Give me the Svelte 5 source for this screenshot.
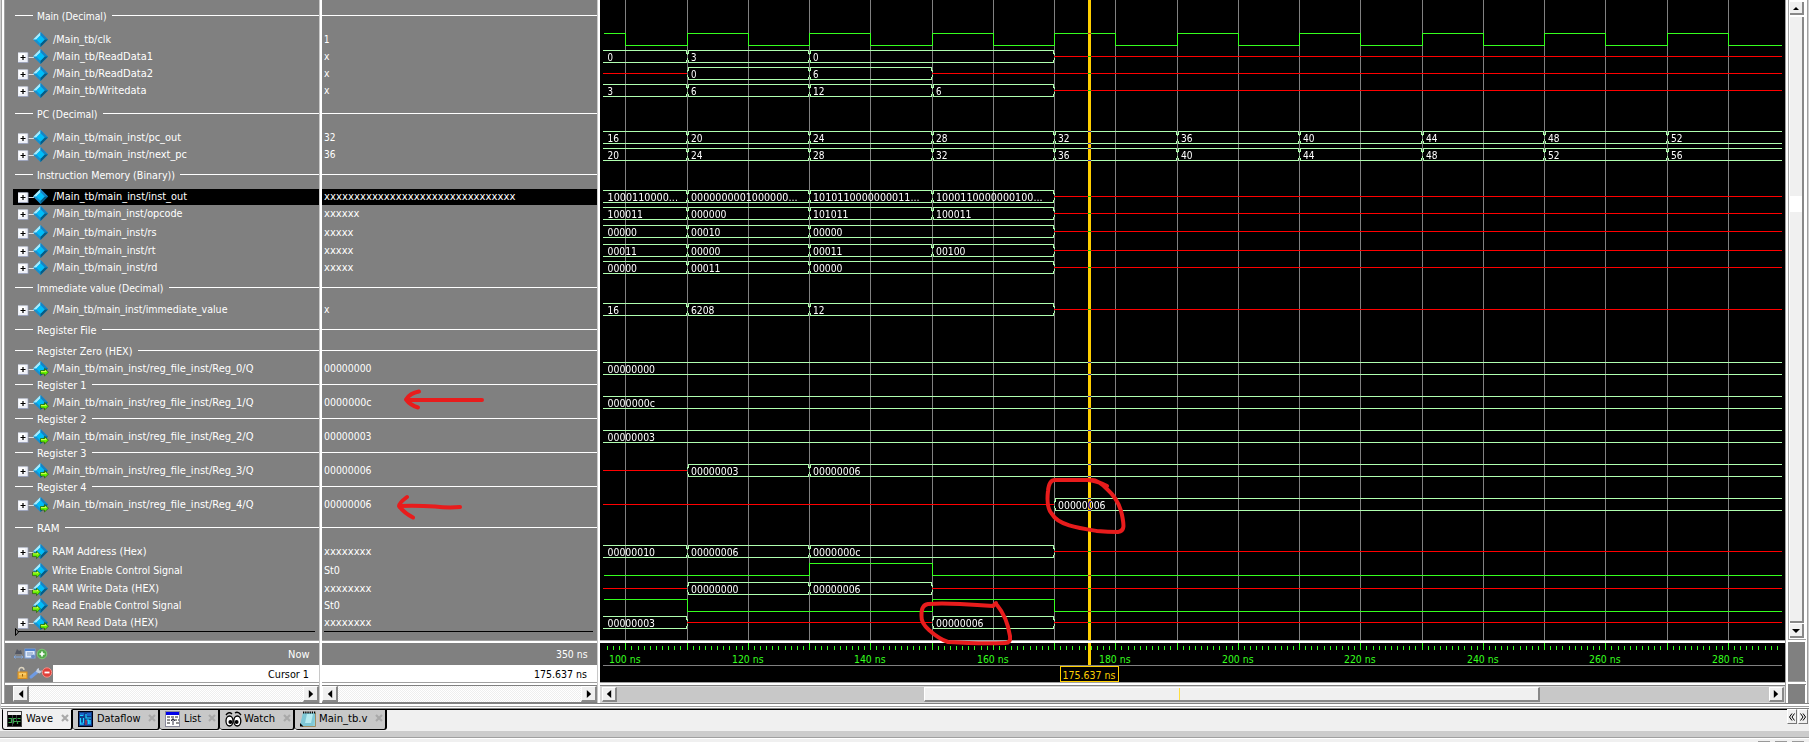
<script>
  const groups = [
    ['d', 20, 'Main (Decimal)', 69.5],
    ['s', 43, '/Main_tb/clk', 58, '1', { plain: true }],
    ['s', 60, '/Main_tb/ReadData1', 100, 'x'],
    ['s', 77, '/Main_tb/ReadData2', 100, 'x'],
    ['s', 94, '/Main_tb/Writedata', 93.5, 'x'],
    ['d', 118, 'PC (Decimal)', 60.5],
    ['s', 141, '/Main_tb/main_inst/pc_out', 128, '32'],
    ['s', 158, '/Main_tb/main_inst/next_pc', 134, '36'],
    ['d', 179, 'Instruction Memory (Binary))', 138],
    ['s', 200, '/Main_tb/main_inst/inst_out', 134, 'x'.repeat(32), { selected: true }],
    ['s', 217, '/Main_tb/main_inst/opcode', 129.5, 'xxxxxx'],
    ['s', 236, '/Main_tb/main_inst/rs', 103.5, 'xxxxx'],
    ['s', 254, '/Main_tb/main_inst/rt', 102.5, 'xxxxx'],
    ['s', 271, '/Main_tb/main_inst/rd', 104.5, 'xxxxx'],
    ['d', 292, 'Immediate value (Decimal)', 126.5],
    ['s', 313, '/Main_tb/main_inst/immediate_value', 174.5, 'x'],
    ['d', 334, 'Register File', 59.5],
    ['d', 355, 'Register Zero (HEX)', 95.5],
    ['s', 372, '/Main_tb/main_inst/reg_file_inst/Reg_0/Q', 200.5, '00000000', { port: 'out' }],
    ['d', 389, 'Register 1', 49.5],
    ['s', 406, '/Main_tb/main_inst/reg_file_inst/Reg_1/Q', 200.5, '0000000c', { port: 'out' }],
    ['d', 423, 'Register 2', 49.5],
    ['s', 440, '/Main_tb/main_inst/reg_file_inst/Reg_2/Q', 200.5, '00000003', { port: 'out' }],
    ['d', 457, 'Register 3', 49.5],
    ['s', 474, '/Main_tb/main_inst/reg_file_inst/Reg_3/Q', 200.5, '00000006', { port: 'out' }],
    ['d', 491, 'Register 4', 49.5],
    ['s', 508, '/Main_tb/main_inst/reg_file_inst/Reg_4/Q', 200.5, '00000006', { port: 'out' }],
    ['d', 532, 'RAM', 22.5],
    ['s', 555, 'RAM Address (Hex)', 94.5, 'xxxxxxxx', { port: 'in' }],
    ['s', 574, 'Write Enable Control Signal', 130.5, 'St0', { port: 'in', plain: true }],
    ['s', 592, 'RAM Write Data (HEX)', 107, 'xxxxxxxx', { port: 'in' }],
    ['s', 609, 'Read Enable Control Signal', 129.5, 'St0', { port: 'in', plain: true }],
    ['s', 626, 'RAM Read Data (HEX)', 106, 'xxxxxxxx', { port: 'out' }]
  ];
  const rows = groups.map((g, i) => ({
    kind: g[0], text: g[2], w: g[3], value: g[4], opt: g[5] || {},
    h: (i + 1 < groups.length ? groups[i + 1][1] : g[1] + 16) - g[1]
  }));

  const END = 1782;
  const gx = (ns) => Math.floor(625.76 + (ns - 100) * 6.125);
  const buses = [
    [60, [['0', 0, 110], ['3', 110, 130], ['0', 130, 170]]],
    [77, [['0', 110, 130], ['6', 130, 150]]],
    [94, [['3', 0, 110], ['6', 110, 130], ['12', 130, 150], ['6', 150, 170]]],
    [141, [['16', 0, 110], ['20', 110, 130], ['24', 130, 150], ['28', 150, 170], ['32', 170, 190], ['36', 190, 210], ['40', 210, 230], ['44', 230, 250], ['48', 250, 270], ['52', 270, 999]]],
    [158, [['20', 0, 110], ['24', 110, 130], ['28', 130, 150], ['32', 150, 170], ['36', 170, 190], ['40', 190, 210], ['44', 210, 230], ['48', 230, 250], ['52', 250, 270], ['56', 270, 999]]],
    [200, [['1000110000...', 0, 110], ['0000000001000000...', 110, 130], ['1010110000000011...', 130, 150], ['1000110000000100...', 150, 170]]],
    [217, [['100011', 0, 110], ['000000', 110, 130], ['101011', 130, 150], ['100011', 150, 170]]],
    [235, [['00000', 0, 110], ['00010', 110, 130], ['00000', 130, 170]]],
    [254, [['00011', 0, 110], ['00000', 110, 130], ['00011', 130, 150], ['00100', 150, 170]]],
    [271, [['00000', 0, 110], ['00011', 110, 130], ['00000', 130, 170]]],
    [313, [['16', 0, 110], ['6208', 110, 130], ['12', 130, 170]]],
    [372, [['00000000', 0, 999]]],
    [406, [['0000000c', 0, 999]]],
    [440, [['00000003', 0, 999]]],
    [474, [['00000003', 110, 130], ['00000006', 130, 999]]],
    [508, [['00000006', 170, 999]]],
    [555, [['00000010', 0, 110], ['00000006', 110, 130], ['0000000c', 130, 170]]],
    [592, [['00000000', 110, 130], ['00000006', 130, 150]]],
    [626, [['00000003', 0, 110], ['00000006', 150, 170]]]
  ];
  const sx = (t) => (t === 0 ? 603 : t === 999 ? END : gx(t));
  let busPath = '', redPath = '';
  const texts = [];
  for (const [b, segs] of buses) {
    let at = 603;
    const top = b - 9.5, bot = b + 2.5, mid = b - 3.5;
    for (const [t, s, e] of segs) {
      const a = sx(s), z = sx(e);
      if (a > at) redPath += `M${at} ${mid}H${a}`;
      const l = s ? a + 1 : a;
      busPath += `M${l} ${top}H${z}M${l} ${bot}H${z}`;
      if (s) busPath += `M${a + 1.5} ${top}v3M${a + 1.5} ${bot}v-3M${a + 0.5} ${top + 2.5}v2M${a + 0.5} ${bot - 2.5}v-2`;
      if (e !== 999) busPath += `M${z - 0.5} ${top}v3M${z - 0.5} ${bot}v-3M${z + 0.5} ${top + 2.5}v2M${z + 0.5} ${bot - 2.5}v-2`;
      texts.push([t, s ? a + 4 : 607.5, b + 1]);
      at = z;
    }
    if (at < END) redPath += `M${at} ${mid}H${END}`;
  }
  const tw = (t) => (t.endsWith('...') ? (t.length - 3) * 6 + 11 : t.length * 6);

  const scalar = (b, first, toggles) => {
    let lv = first, p = `M604 ${b + (lv ? -9.5 : 2.5)}`;
    for (const t of toggles) {
      lv = !lv;
      p += `H${gx(t) + 0.5}V${b + (lv ? -9.5 : 2.5)}`;
    }
    return p + `H${END}`;
  };
  const tens = Array.from({ length: 19 }, (_, i) => 100 + i * 10);
  const scalars = scalar(43, true, tens) + scalar(573, false, [130, 150]) + scalar(609, true, [110, 150, 170]);
  const ticks = Array.from({ length: 192 }, (_, i) => 97 + i).filter((n) => gx(n) < END);
  const tabs = [
    ['Wave', 27, 71, 'wave'], ['Dataflow', 43.5, 87, 'flow'], ['List', 17, 60, 'list'],
    ['Watch', 31, 75, 'watch'], ['Main_tb.v', 48.5, 92, 'file']
  ];
</script>

{#snippet label(t, w)}
  <svg class="label" width={w} height="16"><text x="0" y="11" textLength={w} lengthAdjust="spacingAndGlyphs">{t}</text></svg>
{/snippet}

{#snippet diamond(port)}
  <svg class="gem" width="16" height="16" viewBox="0 0 16 16">
    <path d="M7.5 0L0 7.5 7.5 15 15 7.5z" fill="#1590cf" />
    <path d="M7.5 0L0 7.5H3.5L7.5 3.5z" fill="#a6ecff" />
    <path d="M7.5 0L15 7.5H11.5L7.5 3.5z" fill="#1683c4" />
    <path d="M15 7.5L7.5 15V11.5L11.5 7.5z" fill="#055c86" />
    <path d="M7.5 3.3L3.3 7.5 7.5 11.7 11.7 7.5z" fill="#00bdf8" />
    {#if port === 'out'}
      <path d="M7.500 9.500h4V7.500l4 3.700-4 3.800v-2h-4z" fill="#62f000" stroke="#1d5200" stroke-width=".6" /><path d="M8 9.900h4.200V9l1.600 1.700H8z" fill="#f0ff60" />
    {:else if port === 'in'}
      <path d="M-.5 9h4V7l4 3.800-4 3.800v-2h-4z" fill="#62f000" stroke="#1d5200" stroke-width=".6" /><path d="M0 9.400h4.200v-.9l1.600 1.700H0z" fill="#f0ff60" />
    {/if}
  </svg>
{/snippet}

{#snippet arrow(dir)}
  <span class="btn"><svg width="6" height="8" viewBox="0 0 6 8"><path d={dir === 'l' ? 'M5.200 0v8L.8 4z' : 'M.8 0v8L5.200 4z'} fill="#000" /></svg></span>
{/snippet}

<div class="app">
  <div class="main">
    <div class="col names">
      <div class="rows">
        {#each rows as r}
          <div class="row" style="height:{r.h}px">
            {#if r.kind === 'd'}
              <i class="rule short"></i>{@render label(r.text, r.w)}<i class="rule"></i>
            {:else}
              <div class="sig" class:selected={r.opt.selected}>
                {#if r.opt.plain}<i class="blank"></i>{:else}
                  <svg class="exp" width="16" height="16" viewBox="0 0 16 16"><rect x="0" y="3.5" width="10.5" height="10.5" fill="#8a93ad" /><rect x="0" y="3.5" width="9.7" height="9.7" fill="#eef0f7" /><rect x="1" y="4.5" width="6" height="6" fill="#fff" /><path d="M2.500 8.500h5M5 6v5" stroke="#000" stroke-width="1.200" /><path d="M10.500 8.500H16" stroke="#ddd" /></svg>
                {/if}
                {@render diamond(r.opt.port)}
                <span class={r.text[0] === '/' ? 'nm' : 'nm alias'}>{@render label(r.text, r.w)}</span>
              </div>
            {/if}
          </div>
        {/each}
        <svg class="insert" width="304" height="8"><path d="M.5 .5v7L3.500 4z" fill="none" stroke="#000" /><path d="M3 3.500H300" stroke="#000" /></svg>
      </div>
      <div class="split"></div>
      <div class="now">
        <svg class="tools" width="40" height="14" viewBox="0 0 40 14">
          <path d="M2 7l2-5 2 2 2-1 1 4H2z" fill="#545863" /><path d="M1 10h9M2.500 8.500L1 10l1.500 1.500M8.500 8.500L10 10 8.500 11.500" stroke="#7fa7df" fill="none" />
          <rect x="12" y="2" width="10" height="9" fill="#dfeafa" stroke="#7ba2df" /><path d="M12 3h10" stroke="#4f83d0" stroke-width="2" /><path d="M14 6h6M14 8h5" stroke="#7894bd" /><circle cx="20" cy="9.500" r="2" fill="#688ac2" />
          <circle cx="29" cy="7" r="4.800" fill="#54a94b" stroke="#80c878" /><path d="M26.500 7h5M29 4.500v5" stroke="#fff" stroke-width="1.700" />
        </svg>
        {@render label('Now', 21.5)}
      </div>
      <div class="cur">
        <div class="curtools"><svg width="36" height="14" viewBox="0 0 36 14">
          <path d="M2 6V4a2.500 2.500 0 0 1 5 0" fill="none" stroke="#ddd4c0" stroke-width="1.300" /><rect x="1" y="6" width="9" height="6.500" fill="#f2b544" stroke="#d58d20" /><path d="M2 8h7" stroke="#ffe08a" /><path d="M5.500 8v2.500" stroke="#9a6510" />
          <path d="M14 11l6-5" stroke="#6f9be3" stroke-width="3" stroke-linecap="round" /><path d="M19 6l1-3 2-1v2l1.500 1 1-1v2l-2 1.500z" fill="#c3cedf" />
          <circle cx="30" cy="6.500" r="4.700" fill="#e0403a" stroke="#f39088" /><path d="M27.500 6.500h5" stroke="#fff" stroke-width="1.800" />
        </svg></div>
        {@render label('Cursor 1', 41)}
      </div>
      <div class="split2"></div>
      <div class="hs">{@render arrow('l')}<i class="dither"></i>{@render arrow('r')}</div>
    </div>
    <div class="vsplit"></div>

    <div class="col vals">
      <div class="rows">
        {#each rows as r}
          <div class="row" style="height:{r.h}px">
            {#if r.kind === 'd'}<i class="rule full"></i>{:else}
              <div class="val" class:selected={r.opt.selected}>{@render label(r.value, r.value === 'St0' ? 16 : r.value.length * 6 - 0.5)}</div>
            {/if}
          </div>
        {/each}
        <svg class="insert v" width="272" height="8"><path d="M0 3.500H269" stroke="#000" /></svg>
      </div>
      <div class="split"></div>
      <div class="now">{@render label('350 ns', 31.5)}</div>
      <div class="cur">{@render label('175.637 ns', 53)}</div>
      <div class="split2"></div>
      <div class="hs">{@render arrow('l')}<i class="dither"></i>{@render arrow('r')}</div>
    </div>
    <div class="vsplit"></div>

    <div class="col wave">
      <svg class="plot" width="1185" height="640" viewBox="600 0 1185 640">
        {#each tens as t}<path d="M{gx(t) + 0.5} 0V640" stroke="#808080" shape-rendering="crispEdges" />{/each}
        <g fill="none" shape-rendering="crispEdges">
          <path d={redPath} stroke="#ff0000" />
          <path d={busPath} stroke="#b0ffb0" />
          <path d={scalars} stroke="#35ff1e" />
        </g>
        {#each texts as [t, x, y]}<text {x} {y} textLength={tw(t) - 0.5} lengthAdjust="spacingAndGlyphs" fill="#fff">{t}</text>{/each}
        <rect class="cursor" x="1088" y="0" width="3" height="640" fill="#ffcf00" />
      </svg>
      <div class="split"></div>
      <svg class="axis" width="1185" height="39" viewBox="600 643 1185 39">
        {#each ticks as n}<path d="M{gx(n) + 0.5} {n % 10 ? 646 : 643}V650" stroke="#35ff1e" shape-rendering="crispEdges" />{/each}
        {#each tens.filter((t) => t % 20 === 0) as t}<text x={gx(t) - 16} y="663" textLength="31.500" lengthAdjust="spacingAndGlyphs" fill="#35ff1e">{t} ns</text>{/each}
        <path d="M603 665.500H1782" stroke="#808080" />
        <rect x="1088" y="643" width="3" height="22" fill="#ffcf00" />
        <rect x="1060.500" y="666.500" width="58" height="15" fill="#000" stroke="#ffcf00" />
        <text x="1062.500" y="679" textLength="53" lengthAdjust="spacingAndGlyphs" fill="#ffcf00">175.637 ns</text>
      </svg>
      <div class="split2"></div>
      <div class="hs big">{@render arrow('l')}<i class="track"></i><i class="thumb"></i><i class="track b"></i>{@render arrow('r')}</div>
    </div>
    <div class="right">
      <div class="vscroll">
        <span class="vbtn"><svg width="6" height="3"><path d="M0 3L3 0 6 3z" /></svg></span>
        <i class="vthumb"><b></b></i>
        <span class="vbtn dn"><svg width="8" height="4"><path d="M0 0H8L4 4z" /></svg></span>
      </div>
      <div class="split"></div>
      <i class="dark"></i>
      <div class="split2"></div>
      <i class="dark low"></i>
    </div>
  </div>
  <div class="frame"></div>
  <div class="tabbar">
    {#each tabs as [name, w, tab, icon], i}
      <div class="tab" class:active={i === 0} style="width:{tab}px">
        <svg class="ticon" width="17" height="16" viewBox="0 0 17 16">
          {#if icon === 'wave'}
            <rect x=".5" y=".5" width="14" height="15" fill="#000" stroke="#444" /><rect x="1" y="1" width="13" height="3" fill="#eee" /><path d="M1.500 7.500h3v4h-3M6.500 12.500V7.500h2.500M10.500 7.500h3M7 10.500h4M10.500 13v-2.500h3" stroke="#38a84c" fill="none" stroke-width="1.200" /><path d="M5.500 4v11M9.500 4v7" stroke="#667" stroke-width=".6" />
          {:else if icon === 'flow'}
            <rect x=".5" y=".5" width="14" height="15" fill="#103c88" stroke="#001" /><path d="M2 2h4v3H2zM9 2h4v3H9zM2 11h4v3H2zM9 9h4v5H9z" fill="#1b63c8" /><path d="M2 4.500h3M2.500 7v6h3M5.500 7v5M8 3v4h5M8.500 9h2v4M12 9v4" stroke="#1ed6ff" stroke-width="1.200" fill="none" /><path d="M8 9v5" stroke="#e33" />
          {:else if icon === 'list'}
            <rect x=".5" y=".5" width="14" height="15" fill="#fff" stroke="#889" /><rect x="1" y="1" width="13" height="3" fill="#0000e8" /><path d="M2 6h12M2 9h5M9 9h5M2 12h3M11 12h3" stroke="#222" stroke-dasharray="3 1" /><path d="M8 7v7M6 10l2-2 2 2" stroke="#334" fill="none" />
          {:else if icon === 'watch'}
            <g fill="#fff" stroke="#000" stroke-width="1.300"><ellipse cx="4.500" cy="10" rx="3.500" ry="5" /><ellipse cx="12.300" cy="10" rx="3.500" ry="5" /></g><circle cx="5.400" cy="11" r="2" /><circle cx="11.600" cy="11" r="2" /><path d="M1 4q3-4 6-1M10 2q3-2 6 2" stroke="#000" fill="none" stroke-width="1.400" />
          {:else}
            <path d="M3 2h13v13H0z" fill="#8fd2dc" /><path d="M3 2h13L13 15H0z" fill="#7fc8d6" /><path d="M7 3h6l-2 9H5z" fill="#b7ebf0" /><path d="M15.500 2v13.500H2" stroke="#a08b60" fill="none" /><path d="M3 1.500h13" stroke="#000" stroke-width="2" stroke-dasharray="1.300 .9" /><path d="M0 12l3.500 3.500H0z" />
          {/if}
        </svg>
        <span class="tname">{@render label(name, w)}</span>
        <svg class="close" width="8" height="8" viewBox="0 0 8 8"><path d="M1 1l6 6M7 1L1 7" stroke="#a9a9a9" stroke-width="2.200" /></svg>
      </div>
    {/each}
    <i class="fill"></i>
    <span class="nav"><svg width="6" height="8"><path d="M3 .5L.5 4 3 7.500M5.500 .5L3 4l2.500 3.500" /></svg></span>
    <span class="nav"><svg width="6" height="8"><path d="M.5 .5L3 4 .5 7.500M3 .5L5.500 4 3 7.500" /></svg></span>
  </div>
  <div class="band"></div>
  <div class="status"><i></i><i></i><i></i></div>

  <svg class="ink" width="1809" height="742" fill="none" stroke="#e81c1c" stroke-width="4" stroke-linecap="round" stroke-linejoin="round">
    <path d="M482 400H407M419 391.500Q410 393 406 399.500Q410 405 418 407.500" />
    <path d="M460 507Q448 508 435 506.500Q418 505.500 400 506M407 497Q399 503 399 506Q404 513 413 517.500" />
    <path d="M1107 486Q1098 481 1088 480H1055Q1049 480 1048 491Q1046 508 1052 514C1058 525 1078 528 1097 531Q1108 532 1118 532C1125 531 1124 525 1122 515Q1119 500 1107 489Q1098 480 1092 480" />
    <path d="M996 603L993 606Q978 605 960 604Q940 603 928 604Q921 605 921.500 616Q921 623 929 630Q939 639 948 642Q980 644 1005 643Q1011 643 1010 636Q1007 617 997 605" />
  </svg>
</div>

<style>
  :global(body) { background: #ccc; overflow: hidden; }
  .app { position: relative; width: 1809px; height: 742px; display: flex; flex-direction: column; background: #cfcfcf; font: 11px "DejaVu Sans Condensed", "DejaVu Sans", sans-serif; font-stretch: condensed; overflow: hidden; }
  i { display: block; }
  svg { display: block; flex: none; }
  .main { height: 703px; display: flex; box-sizing: border-box; width: 1807px; margin-left: 1px; border-left: 1px solid #a0a0a0; padding-left: 2px; background: #fff; border-right: 1px solid #a0a0a0; flex: none; }
  .col { display: flex; flex-direction: column; background: #808080; flex: none; }
  .names { width: 314px; border-left: 1px solid #a0a0a0; }
  .vals { width: 275px; }
  .wave { width: 1185px; background: #000; border-right: 1px solid #a0a0a0; }
  .vsplit { width: 3px; background: linear-gradient(90deg, #c8c8c8 1px, #fff 1px); flex: none; }
  .rows { height: 631px; padding-top: 9px; position: relative; flex: none; }
  .row { display: flex; color: #fff; }
  .label { overflow: visible; fill: currentColor; }
  .rule { height: 1px; background: #fff; margin-top: 6px; flex: 1; margin-left: 5px; }
  .rule.short { flex: none; width: 18px; margin: 6px 4px 0 10px; }
  .rule.full { margin-left: 0; }
  .sig { flex: 1; display: flex; height: 16px; margin-left: 8px; padding-left: 5px; }
  .blank { width: 16px; }
  .selected { background: #000; }
  .gem { margin-left: -1px; overflow: visible; }
  .nm { margin-left: 4px; }
  .alias { margin-left: 3px; }
  .val { height: 16px; flex: 1; padding-left: 1.5px; }
  .insert { position: absolute; left: 10px; top: 628px; }
  .insert.v { left: 2px; }
  .split { height: 3px; background: linear-gradient(#a0a0a0 1px, #fff 1px); flex: none; }
  .split2 { height: 4px; background: linear-gradient(#a0a0a0 1px, #fff 1px 3px, #808080 3px); flex: none; }
  .now { height: 22px; display: flex; justify-content: flex-end; align-items: flex-start; padding: 4px 10px 0 8px; box-sizing: border-box; color: #fff; flex: none; }
  .now .tools { margin-right: auto; }
  .cur { height: 17px; display: flex; justify-content: flex-end; background: #fff; color: #000; padding-right: 10px; flex: none; }
  .cur > .label { margin-top: 2px; }
  .curtools { width: 36px; padding: 1px 0 2px 12px; background: #808080; margin-right: auto; }
  .hs { display: flex; height: 17px; flex: none; background: #808080; }
  .names .hs { padding-left: 8px; }
  .btn { width: 16px; height: 16px; box-sizing: border-box; background: #f0f0f0; border: 1px solid #fff; border-right: 2px solid #888; border-bottom: 2px solid #888; display: grid; place-items: center; }
  .dither { flex: 1; height: 16px; background: repeating-conic-gradient(#fff 0 25%, #eee 0 50%) 0 0 / 2px 2px; }
  .big { background: #d8d8d8; padding: 1px 1px 1px 2px; height: 15px; }
  .big .btn { width: 15px; height: 15px; }
  .big .track { width: 307px; background: #c8c8c8; }
  .big .thumb { width: 616px; box-sizing: border-box; background: linear-gradient(90deg, transparent 254px, #ffdf40 254px 255px, transparent 255px), #f0f0f0; border: 1px solid #fff; border-right: 2px solid #888; border-bottom: 2px solid #888; }
  .big .track.b { flex: 1; width: auto; }
  .right { display: flex; flex-direction: column; width: 18px; margin-left: 2px; flex: none; }
  .vscroll { height: 640px; display: flex; flex-direction: column; border-left: 1px solid #a0a0a0; width: 16px; box-sizing: border-box; padding-left: 1px; background: #fff; }
  .vbtn { width: 14px; height: 13px; margin-top: 2px; padding-top: 1px; box-sizing: border-box; border-right: 2px solid #888; border-bottom: 2px solid #888; background: #f0f0f0; display: grid; place-items: center; flex: none; }
  .vthumb { flex: 1; margin-top: 2px; box-sizing: border-box; border-right: 2px solid #888; border-bottom: 2px solid #888; background: #f0f0f0; width: 14px; padding-top: 179px; }
  .vthumb b { display: block; height: 16px; background: #fff; }
  .vbtn.dn { margin-top: 1px; margin-bottom: 1px; height: 14px; }
  .dark { height: 39px; width: 17px; background: #808080; }
  .dark.low { height: 18px; }
  .frame { height: 6px; flex: none; margin-left: 1px; background: linear-gradient(#808080 1px, #fff 1px 3px, #a0a0a0 3px 4px, #fff 4px 5px, #808080 5px); }
  .tabbar { display: flex; height: 22px; background: #f0f0f0; flex: none; padding-left: 2px; }
  .tab { height: 21px; box-sizing: border-box; display: flex; background: #c8c8c8; border: 1px solid #000; border-left-width: 0; border-right-width: 2px; border-radius: 0 0 3px 3px; padding-left: 5px; color: #000; }
  .tab.active { background: #f0f0f0; border-top-color: #f0f0f0; border-left-width: 1px; padding-left: 4px; }
  .ticon { margin-top: 1px; }
  .tname { margin: 1px 0 0 2px; }
  .close { margin: 4px 2px 0 auto; }
  .fill { flex: 1; border-top: 1px solid #000; }
  .nav { width: 10px; height: 15px; box-sizing: border-box; background: #f0f0f0; border: 1px solid #fff; border-right-color: #777; border-bottom-color: #777; display: grid; place-items: center; margin-right: 1px; }
  .nav svg { fill: none; stroke: #000; }
  .band { height: 6px; background: #ccc; flex: none; }
  .status { flex: 1; border-top: 1px solid #a0a0a0; background: linear-gradient(#fff 1px, #f0f0f0 1px); display: flex; justify-content: flex-end; align-items: flex-end; gap: 5px; padding-right: 5px; }
  .status i { width: 12px; height: 1px; background: #999; }
  .cursor { mix-blend-mode: difference; }
  .plot, .axis { background: #000; isolation: isolate; }
  .ink { position: absolute; left: 0; top: 0; pointer-events: none; }
</style>
